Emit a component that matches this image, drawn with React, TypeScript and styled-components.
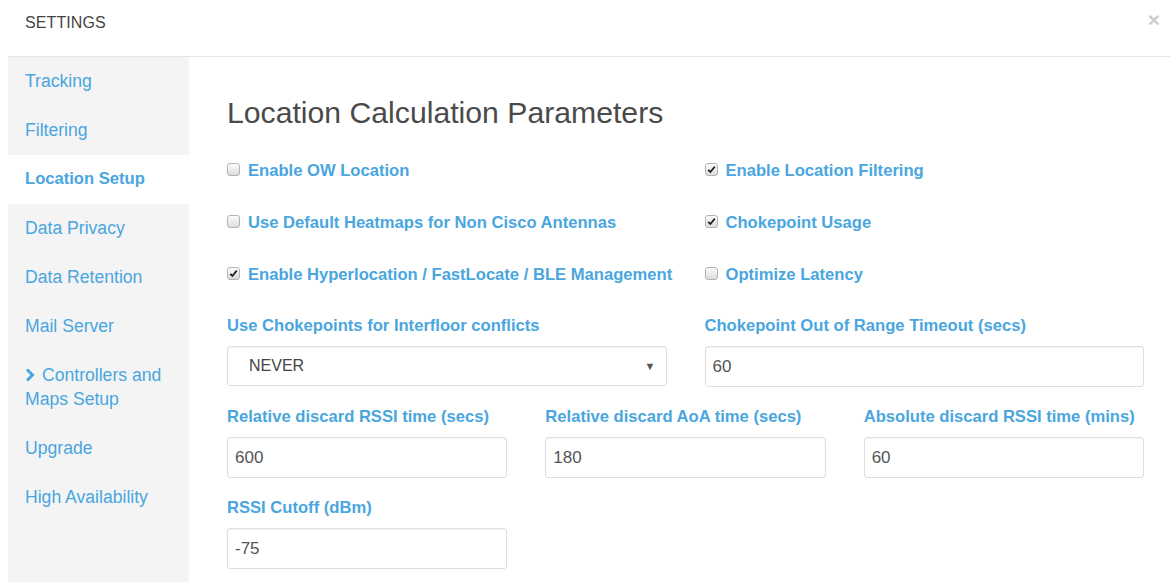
import React from 'react';
import styled, { createGlobalStyle } from 'styled-components';

interface NavItem {
  label: string;
  active?: boolean;
  expandable?: boolean;
}

interface ToggleItem {
  label: string;
  checked: boolean;
}

const GlobalStyle = createGlobalStyle`
  html, body {
    margin: 0;
    padding: 0;
    background: #fff;
  }
  body {
    font-family: "Liberation Sans", Arial, Helvetica, sans-serif;
  }
`;

const Page = styled.div`
  padding-left: 8px;
  height: 582px;
  display: flex;
  flex-direction: column;
  overflow: hidden;
`;

const Header = styled.div`
  height: 56px;
  flex: none;
  display: flex;
  align-items: center;
  justify-content: space-between;
  padding: 0 10px 0 17px;
  border-bottom: 1px solid #e5e5e5;
`;

const Title = styled.h4`
  margin: 0 0 10px;
  font-size: 16px;
  font-weight: 400;
  color: #444;
  letter-spacing: 0.1px;
`;

const Close = styled.span`
  font-size: 21px;
  font-weight: 700;
  line-height: 1;
  color: #000;
  opacity: 0.2;
  margin-bottom: 18px;
`;

const Body = styled.div`
  flex: 1;
  display: flex;
  min-height: 0;
`;

const Sidebar = styled.nav`
  width: 181px;
  flex: none;
  background: #f4f4f4;
`;

const NavLink = styled.div<{ $active?: boolean }>`
  padding: 12px 17px 13px;
  font-size: ${p => (p.$active ? '16.6px' : '17.6px')};
  line-height: 24px;
  color: #4aa6de;
  font-weight: ${p => (p.$active ? 700 : 400)};
  background: ${p => (p.$active ? '#fff' : 'transparent')};
`;

const Chevron = styled.svg`
  width: 10px;
  height: 14px;
  margin: 0 7px 0 0;
  vertical-align: -1px;
`;

const Content = styled.main`
  flex: 1;
  min-width: 0;
  padding: 40px 26px 0 38px;
`;

const Heading = styled.h2`
  margin: 0 0 30px;
  font-size: 30.2px;
  line-height: 32px;
  font-weight: 400;
  color: #4a4a4a;
`;

const ToggleGrid = styled.div`
  display: grid;
  grid-template-columns: minmax(0, 1fr) minmax(0, 1fr);
  grid-auto-flow: column;
  grid-template-rows: repeat(3, 24px);
  column-gap: 38px;
  row-gap: 28px;
  margin-bottom: 27px;
`;

const Toggle = styled.label`
  display: flex;
  align-items: center;
  gap: 8px;
  font-size: 16.6px;
  font-weight: 700;
  color: #4aa6de;
  white-space: nowrap;
`;

const Box = styled.span`
  width: 13px;
  height: 13px;
  flex: none;
  box-sizing: border-box;
  border: 1px solid #b3b3b3;
  border-radius: 3px;
  background: linear-gradient(#fdfdfd, #dcdcdc);
  display: flex;
  align-items: center;
  justify-content: center;
  margin-top: -4px;
`;

const FieldGrid = styled.div<{ $cols: number }>`
  display: grid;
  grid-template-columns: repeat(${p => p.$cols}, minmax(0, 1fr));
  column-gap: 38px;
  margin-bottom: 18px;
`;

const Field = styled.div`
  display: flex;
  flex-direction: column;
`;

const FieldLabel = styled.label`
  font-size: 16.6px;
  font-weight: 700;
  line-height: 24px;
  color: #4aa6de;
  margin-bottom: 8px;
  white-space: nowrap;
`;

const TextInput = styled.div`
  height: 41px;
  box-sizing: border-box;
  border: 1px solid #dedede;
  border-radius: 3px;
  box-shadow: inset 0 1px 1px rgba(0, 0, 0, 0.05);
  padding: 0 7px;
  display: flex;
  align-items: center;
  font-size: 17px;
  color: #555;
`;

const Select = styled(TextInput)`
  height: 40px;
  padding: 0 10px 0 21px;
  justify-content: space-between;
  font-size: 16px;
  color: #444;
`;

const Caret = styled.span`
  font-size: 11px;
  color: #555;
`;

const navItems: NavItem[] = [
  { label: 'Tracking' },
  { label: 'Filtering' },
  { label: 'Location Setup', active: true },
  { label: 'Data Privacy' },
  { label: 'Data Retention' },
  { label: 'Mail Server' },
  { label: 'Controllers and Maps Setup', expandable: true },
  { label: 'Upgrade' },
  { label: 'High Availability' }
];

const toggles: ToggleItem[] = [
  { label: 'Enable OW Location', checked: false },
  { label: 'Use Default Heatmaps for Non Cisco Antennas', checked: false },
  { label: 'Enable Hyperlocation / FastLocate / BLE Management', checked: true },
  { label: 'Enable Location Filtering', checked: true },
  { label: 'Chokepoint Usage', checked: true },
  { label: 'Optimize Latency', checked: false }
];

const discardFields = [
  { label: 'Relative discard RSSI time (secs)', value: '600' },
  { label: 'Relative discard AoA time (secs)', value: '180' },
  { label: 'Absolute discard RSSI time (mins)', value: '60' }
];

const CheckBox = ({ checked }: { checked: boolean }) => (
  <Box>
    {checked && (
      <svg width="9" height="9" viewBox="0 0 9 9">
        <path d="M1.2 4.8 L3.4 7 L7.8 1.6" fill="none" stroke="#222" strokeWidth="1.8" />
      </svg>
    )}
  </Box>
);

const App = () => {
  return (
    <Page>
      <GlobalStyle />
      <Header>
        <Title>SETTINGS</Title>
        <Close>×</Close>
      </Header>
      <Body>
        <Sidebar>
          {navItems.map(item => (
            <NavLink key={item.label} $active={item.active}>
              {item.expandable && (
                <Chevron viewBox="0 0 10 14">
                  <path d="M2 1.5 L7.5 7 L2 12.5" fill="none" stroke="#4aa6de" strokeWidth="3" />
                </Chevron>
              )}
              {item.label}
            </NavLink>
          ))}
        </Sidebar>
        <Content>
          <Heading>Location Calculation Parameters</Heading>
          <ToggleGrid>
            {toggles.map(t => (
              <Toggle key={t.label}>
                <CheckBox checked={t.checked} />
                {t.label}
              </Toggle>
            ))}
          </ToggleGrid>
          <FieldGrid $cols={2}>
            <Field>
              <FieldLabel>Use Chokepoints for Interfloor conflicts</FieldLabel>
              <Select>
                NEVER
                <Caret>▼</Caret>
              </Select>
            </Field>
            <Field>
              <FieldLabel>Chokepoint Out of Range Timeout (secs)</FieldLabel>
              <TextInput>60</TextInput>
            </Field>
          </FieldGrid>
          <FieldGrid $cols={3}>
            {discardFields.map(f => (
              <Field key={f.label}>
                <FieldLabel>{f.label}</FieldLabel>
                <TextInput>{f.value}</TextInput>
              </Field>
            ))}
          </FieldGrid>
          <FieldGrid $cols={3}>
            <Field>
              <FieldLabel>RSSI Cutoff (dBm)</FieldLabel>
              <TextInput>-75</TextInput>
            </Field>
          </FieldGrid>
        </Content>
      </Body>
    </Page>
  );
};

export default App;
